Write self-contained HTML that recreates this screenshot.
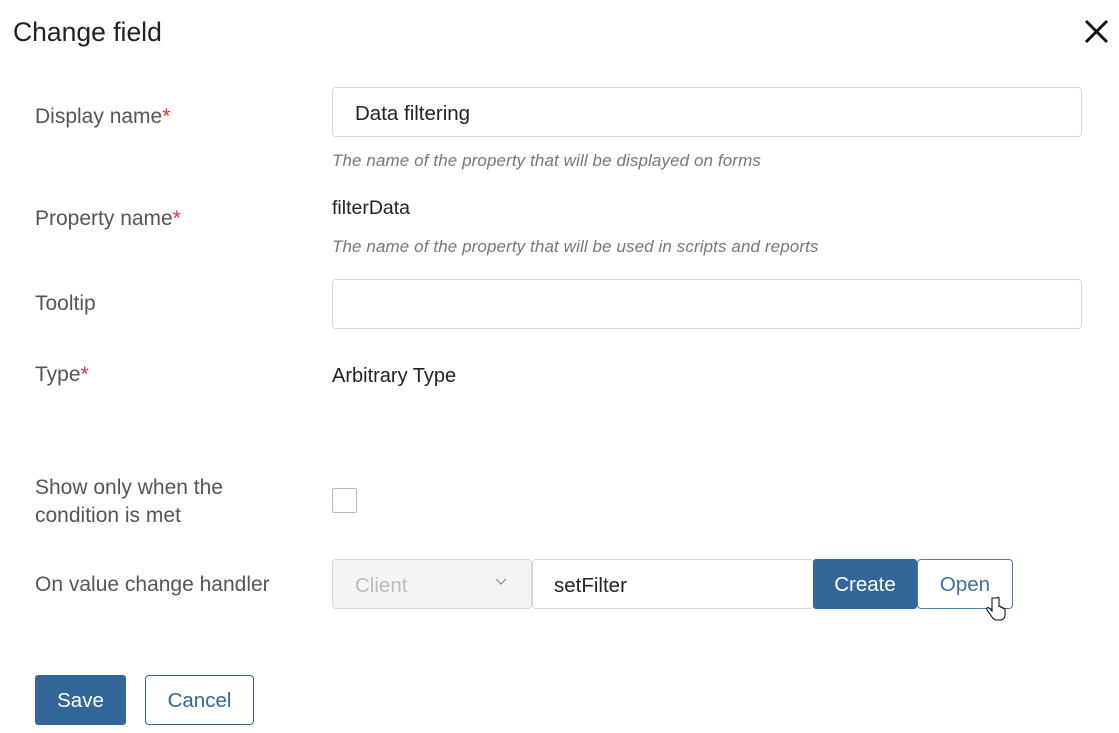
<!DOCTYPE html>
<html><head><style>
body{margin:0;width:1119px;height:733px;background:#fff;font-family:"Liberation Sans",sans-serif;position:relative;overflow:hidden}
.a{position:absolute}
.lbl{position:absolute;left:35px;font-size:21px;color:#555}
.req{color:#d33}
.inp{position:absolute;border:1px solid #d6d6d6;border-radius:4px;background:#fff;box-sizing:border-box}
.hint{position:absolute;left:332px;font-size:17px;font-style:italic;color:#777;letter-spacing:0.1px}
</style></head><body>
<div class="a" style="left:13px;top:17px;font-size:26.5px;color:#222">Change field</div>
<svg class="a" style="left:1084px;top:19px" width="25" height="25"><path d="M2 2L23 23M23 2L2 23" stroke="#111" stroke-width="3"/></svg>

<div class="lbl" style="top:105px">Display name<span class="req">*</span></div>
<div class="inp" style="left:332px;top:87px;width:750px;height:50px"></div>
<div class="a" style="left:355px;top:102px;font-size:20.5px;color:#222">Data filtering</div>
<div class="hint" style="top:151px">The name of the property that will be displayed on forms</div>

<div class="lbl" style="top:207px">Property name<span class="req">*</span></div>
<div class="a" style="left:332px;top:197px;font-size:19.5px;color:#222">filterData</div>
<div class="hint" style="top:237px">The name of the property that will be used in scripts and reports</div>

<div class="lbl" style="top:292px">Tooltip</div>
<div class="inp" style="left:332px;top:279px;width:750px;height:50px"></div>

<div class="lbl" style="top:363px">Type<span class="req">*</span></div>
<div class="a" style="left:332px;top:365px;font-size:20px;color:#222">Arbitrary Type</div>

<div class="lbl" style="top:474px;line-height:28px">Show only when the<br>condition is met</div>
<div class="inp" style="left:332px;top:488px;width:25px;height:25px;border-radius:2px;border-color:#bbb"></div>

<div class="lbl" style="top:573px">On value change handler</div>
<div class="inp" style="left:332px;top:559px;width:200px;height:50px;background:#f4f4f4"></div>
<div class="a" style="left:355px;top:574px;font-size:20.5px;color:#bbb">Client</div>
<svg class="a" style="left:495px;top:578px" width="12" height="8"><path d="M1 1L6 6L11 1" stroke="#888" fill="none" stroke-width="1.2"/></svg>
<div class="inp" style="left:532px;top:559px;width:282px;height:50px"></div>
<div class="a" style="left:554px;top:574px;font-size:20.5px;color:#222">setFilter</div>
<div class="a" style="left:813px;top:559px;width:104px;height:50px;background:#336699;border-radius:3px;color:#fff;font-size:20.5px;text-align:center;line-height:52px">Create</div>
<div class="inp" style="left:917px;top:559px;width:96px;height:50px;border-color:#4a7db0;color:#3d6fa3;font-size:20.5px;text-align:center;line-height:50px">Open</div>
<svg class="a" style="left:986px;top:596px" width="20" height="26"><path d="M6 2v13l-3-3c-1-1-3 0-2 2l5 7c1 2 3 3 5 3h3c3 0 5-2 5-5v-6c0-1-2-1-2 0v-1c0-1-2-1-2 0v-1c0-1-2-1-2 0V2c0-1-2-1-2 0z" fill="#fff" stroke="#111" stroke-width="1.1"/></svg>

<div class="a" style="left:35px;top:675px;width:91px;height:50px;background:#336699;border-radius:3px;color:#fff;font-size:20.5px;text-align:center;line-height:52px">Save</div>
<div class="inp" style="left:145px;top:675px;width:109px;height:50px;border-color:#336699;color:#336699;font-size:20.5px;text-align:center;line-height:50px">Cancel</div>
</body></html>
